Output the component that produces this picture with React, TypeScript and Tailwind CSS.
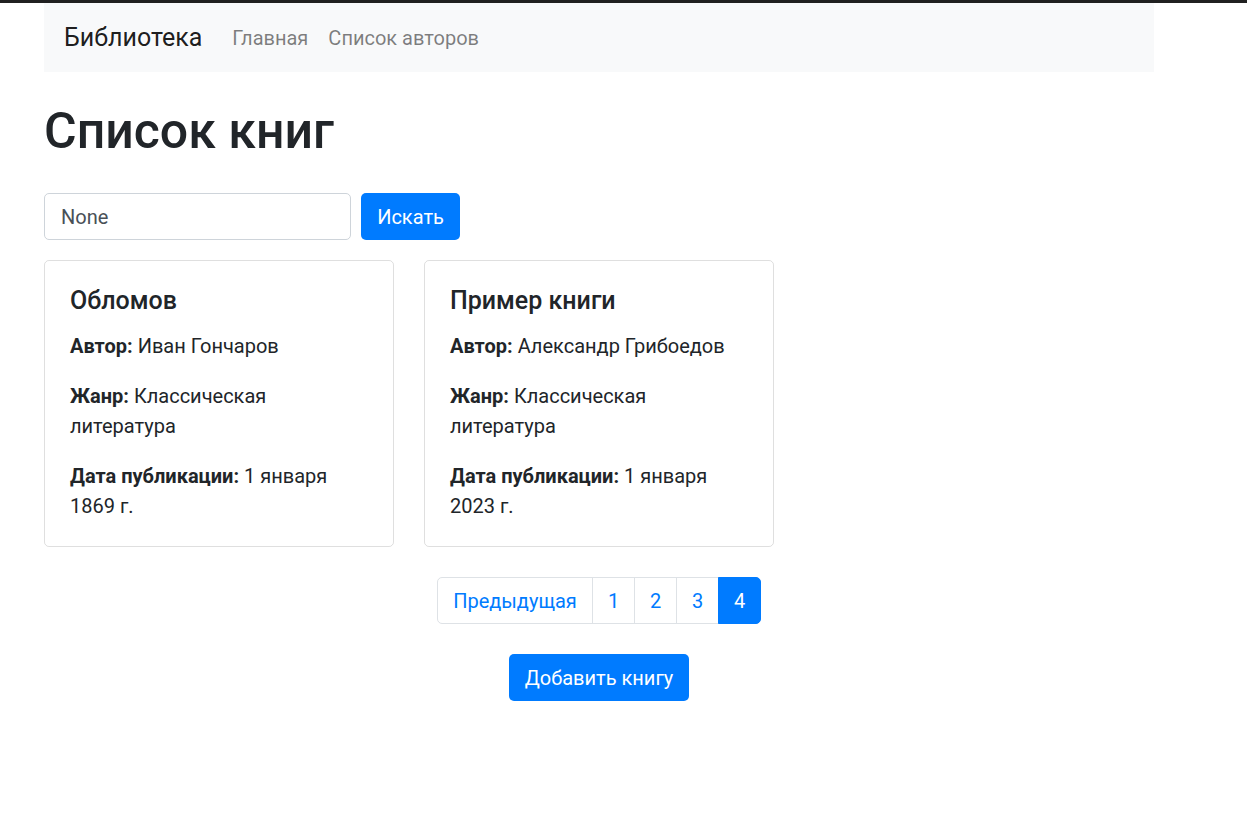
import React from 'react';

const books = [
  { title: 'Обломов', author: 'Иван Гончаров', genre: 'Классическая литература', date: '1 января 1869 г.' },
  { title: 'Пример книги', author: 'Александр Грибоедов', genre: 'Классическая литература', date: '1 января 2023 г.' },
];

const pages = ['1', '2', '3', '4'];

const App = () => {
  return (
    <div className="min-h-screen bg-white font-['Roboto','Liberation_Sans',sans-serif] text-[#212529]">
      <div className="h-[3px] bg-[#202020]"></div>

      <div className="ml-[44px] w-[1110px]">
        {/* Navbar */}
        <nav className="flex h-[69px] items-center bg-[#f8f9fa] px-[20px]">
          <span className="mr-[30px] text-[25px] text-black/90">Библиотека</span>
          <div className="flex gap-[20px] text-[20px] text-black/50">
            <span>Главная</span>
            <span>Список авторов</span>
          </div>
        </nav>

        <h1 className="mt-[29px] mb-[32px] text-[50px] font-medium leading-[60px]">Список книг</h1>

        {/* Search */}
        <div className="flex gap-[10px]">
          <div className="flex h-[47px] w-[307px] items-center rounded-[5px] border border-[#ced4da] px-[16px] text-[20px] text-[#495057]">
            None
          </div>
          <button className="h-[47px] w-[99px] rounded-[5px] bg-[#007bff] text-[20px] text-white">Искать</button>
        </div>

        {/* Cards */}
        <div className="mt-[20px] flex gap-[30px]">
          {books.map((book, index) => (
            <div key={index} className="w-[350px] rounded-[5px] border border-black/[0.125] p-[25px]">
              <h5 className="mb-[15px] text-[25px] font-medium leading-[30px]">{book.title}</h5>
              <p className="mb-[20px] text-[20px] leading-[30px]">
                <strong className="font-bold">Автор:</strong> {book.author}
              </p>
              <p className="mb-[20px] text-[20px] leading-[30px]">
                <strong className="font-bold">Жанр:</strong> {book.genre}
              </p>
              <p className="text-[20px] leading-[30px]">
                <strong className="font-bold">Дата публикации:</strong> {book.date}
              </p>
            </div>
          ))}
        </div>

        {/* Pagination */}
        <div className="mt-[30px] flex justify-center">
          <div className="flex h-[47px] text-[20px]">
            <span className="flex w-[156px] items-center justify-center rounded-l-[5px] border border-[#dee2e6] text-[#007bff]">Предыдущая</span>
            {pages.map((p) =>
              p === '4' ? (
                <span key={p} className="-ml-px flex w-[43px] items-center justify-center rounded-r-[5px] border border-[#007bff] bg-[#007bff] text-white">
                  {p}
                </span>
              ) : (
                <span key={p} className="-ml-px flex w-[43px] items-center justify-center border border-[#dee2e6] text-[#007bff]">
                  {p}
                </span>
              )
            )}
          </div>
        </div>

        <div className="mt-[30px] flex justify-center">
          <button className="h-[47px] rounded-[5px] bg-[#007bff] px-[16px] text-[20px] text-white">Добавить книгу</button>
        </div>
      </div>
    </div>
  );
};

export default App;
